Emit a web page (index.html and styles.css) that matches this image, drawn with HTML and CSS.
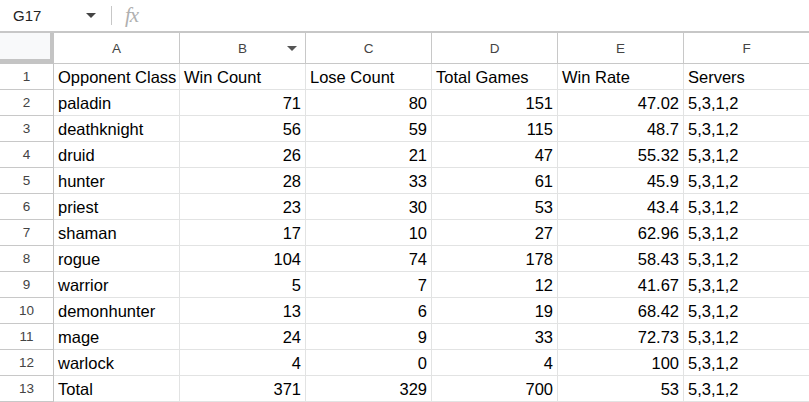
FILE: index.html
```html
<!DOCTYPE html>
<html lang="en">
<head>
    <meta charset="UTF-8">
    <title>Sheet</title>
    <link rel="stylesheet" href="styles.css">
</head>
<body>
    <div class="formula-bar">
        <div class="name-box">
            <span class="cell-ref">G17</span>
            <svg class="caret" width="10" height="5" viewBox="0 0 10 5"><path d="M0 0h10L5 5z" fill="#444"/></svg>
        </div>
        <div class="divider"></div>
        <span class="fx">fx</span>
    </div>

    <div class="sheet">
        <div class="corner"></div>
        <div class="col-head">A</div>
        <div class="col-head">B<svg class="filter" width="10" height="5" viewBox="0 0 10 5"><path d="M0 0h10L5 5z" fill="#555"/></svg></div>
        <div class="col-head">C</div>
        <div class="col-head">D</div>
        <div class="col-head">E</div>
        <div class="col-head">F</div>

        <div class="row-head">1</div>
        <div class="cell">Opponent Class</div>
        <div class="cell">Win Count</div>
        <div class="cell">Lose Count</div>
        <div class="cell">Total Games</div>
        <div class="cell">Win Rate</div>
        <div class="cell">Servers</div>

        <div class="row-head">2</div>
        <div class="cell">paladin</div>
        <div class="cell num">71</div>
        <div class="cell num">80</div>
        <div class="cell num">151</div>
        <div class="cell num">47.02</div>
        <div class="cell">5,3,1,2</div>

        <div class="row-head">3</div>
        <div class="cell">deathknight</div>
        <div class="cell num">56</div>
        <div class="cell num">59</div>
        <div class="cell num">115</div>
        <div class="cell num">48.7</div>
        <div class="cell">5,3,1,2</div>

        <div class="row-head">4</div>
        <div class="cell">druid</div>
        <div class="cell num">26</div>
        <div class="cell num">21</div>
        <div class="cell num">47</div>
        <div class="cell num">55.32</div>
        <div class="cell">5,3,1,2</div>

        <div class="row-head">5</div>
        <div class="cell">hunter</div>
        <div class="cell num">28</div>
        <div class="cell num">33</div>
        <div class="cell num">61</div>
        <div class="cell num">45.9</div>
        <div class="cell">5,3,1,2</div>

        <div class="row-head">6</div>
        <div class="cell">priest</div>
        <div class="cell num">23</div>
        <div class="cell num">30</div>
        <div class="cell num">53</div>
        <div class="cell num">43.4</div>
        <div class="cell">5,3,1,2</div>

        <div class="row-head">7</div>
        <div class="cell">shaman</div>
        <div class="cell num">17</div>
        <div class="cell num">10</div>
        <div class="cell num">27</div>
        <div class="cell num">62.96</div>
        <div class="cell">5,3,1,2</div>

        <div class="row-head">8</div>
        <div class="cell">rogue</div>
        <div class="cell num">104</div>
        <div class="cell num">74</div>
        <div class="cell num">178</div>
        <div class="cell num">58.43</div>
        <div class="cell">5,3,1,2</div>

        <div class="row-head">9</div>
        <div class="cell">warrior</div>
        <div class="cell num">5</div>
        <div class="cell num">7</div>
        <div class="cell num">12</div>
        <div class="cell num">41.67</div>
        <div class="cell">5,3,1,2</div>

        <div class="row-head">10</div>
        <div class="cell">demonhunter</div>
        <div class="cell num">13</div>
        <div class="cell num">6</div>
        <div class="cell num">19</div>
        <div class="cell num">68.42</div>
        <div class="cell">5,3,1,2</div>

        <div class="row-head">11</div>
        <div class="cell">mage</div>
        <div class="cell num">24</div>
        <div class="cell num">9</div>
        <div class="cell num">33</div>
        <div class="cell num">72.73</div>
        <div class="cell">5,3,1,2</div>

        <div class="row-head">12</div>
        <div class="cell">warlock</div>
        <div class="cell num">4</div>
        <div class="cell num">0</div>
        <div class="cell num">4</div>
        <div class="cell num">100</div>
        <div class="cell">5,3,1,2</div>

        <div class="row-head">13</div>
        <div class="cell">Total</div>
        <div class="cell num">371</div>
        <div class="cell num">329</div>
        <div class="cell num">700</div>
        <div class="cell num">53</div>
        <div class="cell">5,3,1,2</div>
    </div>
</body>
</html>
```

FILE: styles.css
```css
body {
    margin: 0;
    background: #fff;
    font-family: "Liberation Sans", Arial, sans-serif;
    overflow: hidden;
}

/* formula bar */
.formula-bar {
    height: 31px;
    display: flex;
    align-items: center;
    border-bottom: 2px solid #c7c7c7;
}

.name-box {
    width: 111px;
    display: flex;
    align-items: center;
    padding-left: 13px;
    box-sizing: border-box;
}

.cell-ref {
    font-size: 15px;
    color: #222;
}

.caret {
    margin-left: auto;
    margin-right: 15px;
}

.divider {
    width: 1px;
    height: 19px;
    background: #c7c7c7;
}

.fx {
    margin-left: 13px;
    font-family: "Liberation Serif", serif;
    font-style: italic;
    font-size: 21px;
    color: #b0b0b0;
    letter-spacing: -1px;
}

/* grid */
.sheet {
    display: grid;
    grid-template-columns: 54px repeat(6, 126px);
    grid-template-rows: 31px;
    grid-auto-rows: 26px;
}

.corner {
    background: #f8f9fa;
    border-right: 4px solid #c4c4c4;
    border-bottom: 5px solid #c4c4c4;
}

.col-head {
    position: relative;
    display: flex;
    align-items: center;
    justify-content: center;
    font-size: 13.5px;
    color: #444;
    border-right: 1px solid #c8c8c8;
    border-bottom: 1px solid #c8c8c8;
    padding-top: 1px;
}

.filter {
    position: absolute;
    right: 8px;
    top: 13px;
}

.row-head {
    display: flex;
    align-items: center;
    justify-content: center;
    font-size: 13.5px;
    color: #444;
    border-right: 1px solid #c4c4c4;
    border-bottom: 1px solid #c8c8c8;
}

.cell {
    display: flex;
    align-items: center;
    padding: 1px 4px 0;
    font-size: 16.5px;
    color: #000;
    border-right: 1px solid #e2e3e3;
    border-bottom: 1px solid #e2e3e3;
    white-space: nowrap;
    overflow: hidden;
}

.num {
    justify-content: flex-end;
}
```
